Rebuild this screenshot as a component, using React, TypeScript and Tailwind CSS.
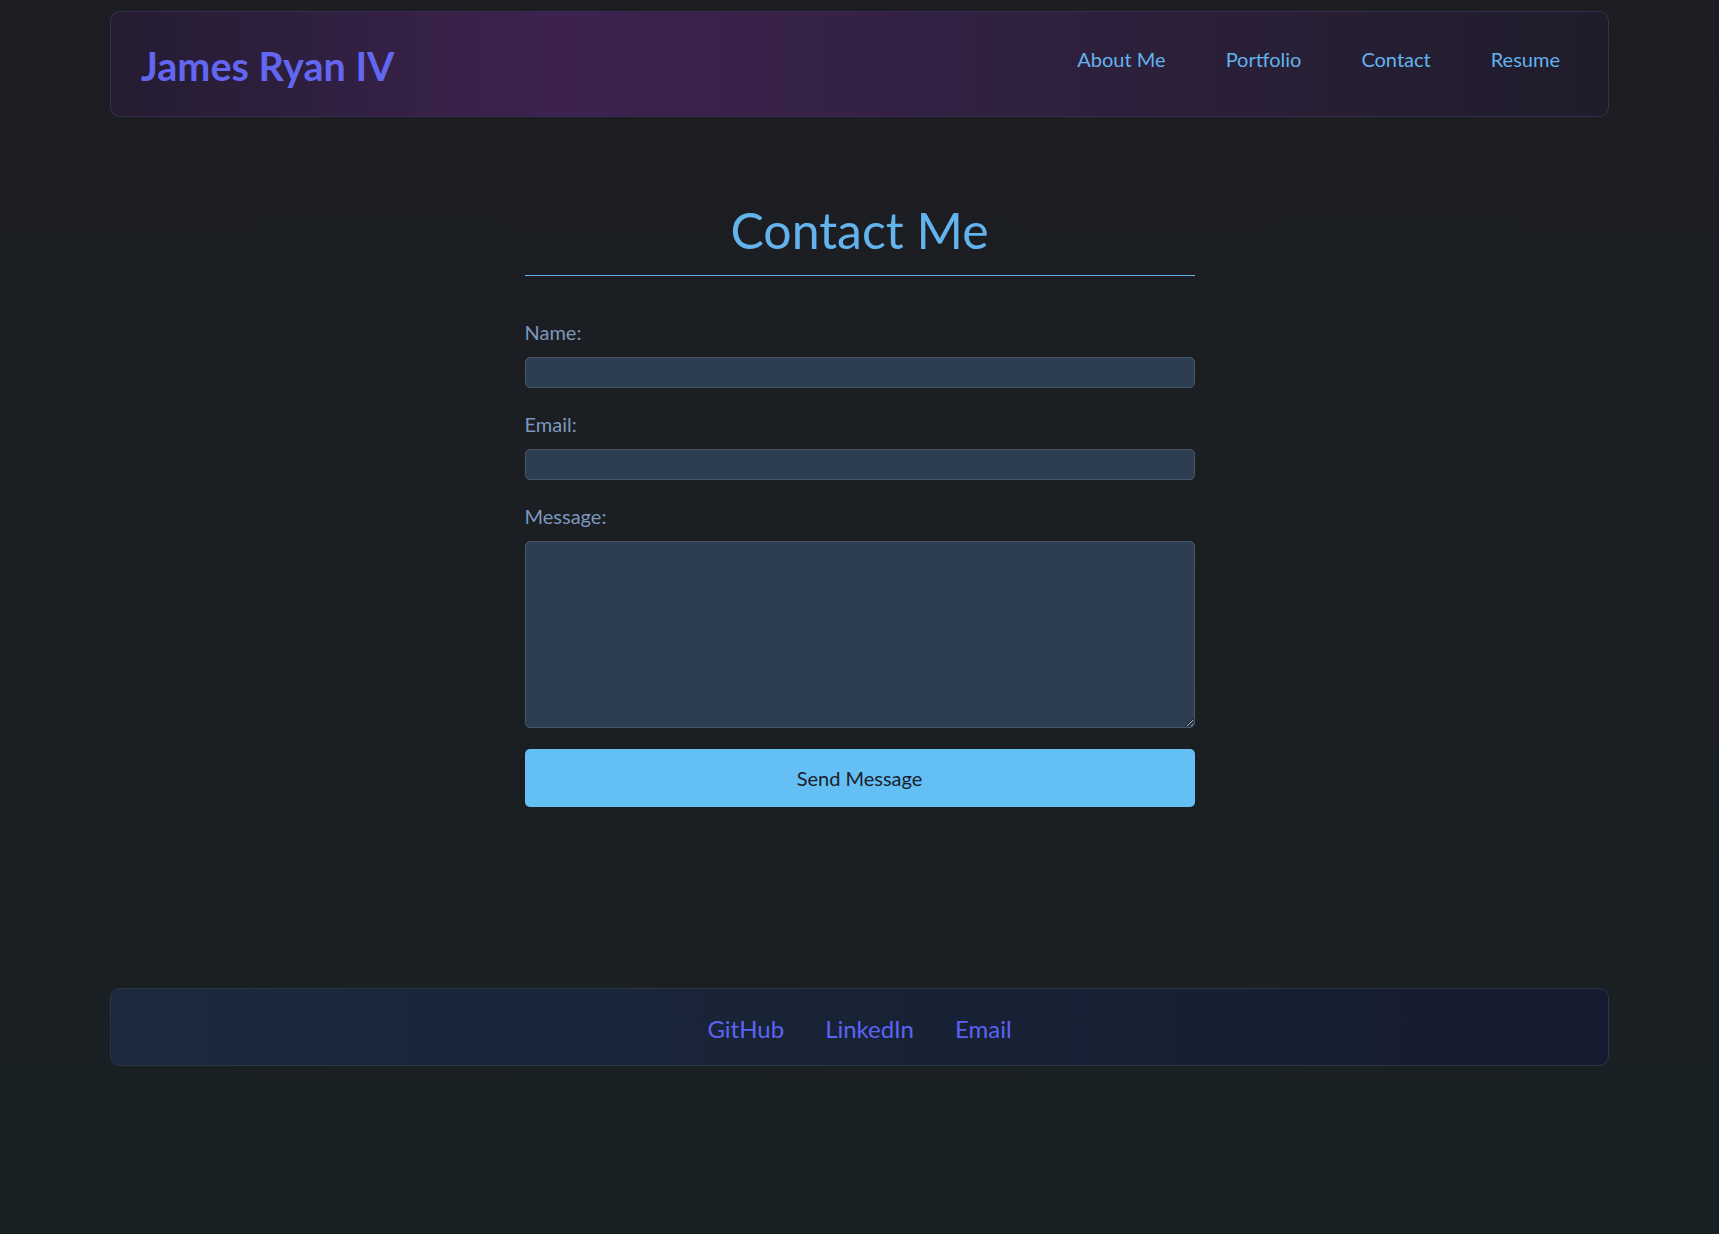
const navLinks = ["About Me", "Portfolio", "Contact", "Resume"];
const footerLinks = ["GitHub", "LinkedIn", "Email"];

function Header() {
  return (
    <header className="mx-[110px] flex h-[106px] items-center justify-between rounded-[10px] border border-[#3a2f4d] bg-gradient-to-r from-[#241c31] via-[#3d2250] via-30% to-[#1f1c2a] pl-[30px] pr-[48px]">
      <a href="#" className="mt-[4px] text-[39.5px] font-bold leading-none text-[#6366f1]">
        James Ryan IV
      </a>
      <nav className="mb-[10px] flex items-center gap-[60px] text-[20px] text-[#63b3ed]">
        {navLinks.map((link) => (
          <a key={link} href="#" className="leading-none">
            {link}
          </a>
        ))}
      </nav>
    </header>
  );
}

function ContactForm() {
  return (
    <section className="mx-auto w-[670px] pt-[88px]">
      <h1 className="border-b border-[#63b3ed] pb-[20px] text-center text-[50px] font-normal leading-none text-[#63b3ed]">
        Contact Me
      </h1>
      <form className="mt-[44px]" onSubmit={(e) => e.preventDefault()}>
        <label className="mb-[13px] block text-[20px] leading-[24px] text-[#7d98bd]">Name:</label>
        <input
          type="text"
          className="mb-[24px] block h-[31px] w-full rounded-[5px] border border-[#4a5568] bg-[#2d3e51] px-2 text-white"
        />
        <label className="mb-[13px] block text-[20px] leading-[24px] text-[#7d98bd]">Email:</label>
        <input
          type="email"
          className="mb-[24px] block h-[31px] w-full rounded-[5px] border border-[#4a5568] bg-[#2d3e51] px-2 text-white"
        />
        <label className="mb-[13px] block text-[20px] leading-[24px] text-[#7d98bd]">Message:</label>
        <textarea className="block h-[187px] w-full rounded-[5px] border border-[#4a5568] bg-[#2d3e51] p-2 text-white" />
        <button
          type="submit"
          className="mt-[21px] block h-[58px] w-full rounded-[5px] bg-[#64bff4] text-[20px] text-[#1a202c]"
        >
          Send Message
        </button>
      </form>
    </section>
  );
}

function Footer() {
  return (
    <footer className="mx-[110px] mt-[181px] flex h-[78px] items-center justify-center gap-[41px] rounded-[10px] border border-[#2a3547] bg-gradient-to-r from-[#1b2a3d] to-[#151b2f] pt-[3px]">
      {footerLinks.map((link) => (
        <a key={link} href="#" className="text-[24px] leading-none text-[#5b63f5]">
          {link}
        </a>
      ))}
    </footer>
  );
}

export default function App() {
  return (
    <div className="min-h-[1234px] bg-gradient-to-b from-[#1c1d22] to-[#192023] pt-[11px] font-['Lato',sans-serif]">
      <Header />
      <ContactForm />
      <Footer />
    </div>
  );
}
